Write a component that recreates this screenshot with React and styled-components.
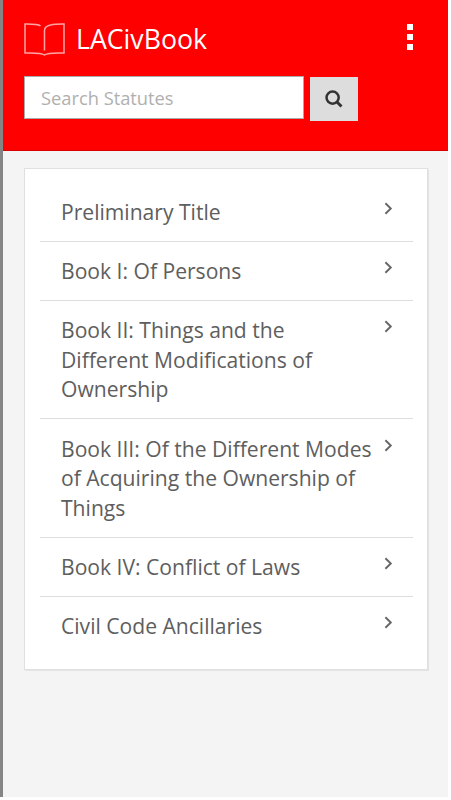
import React from 'react';
import styled, { createGlobalStyle } from 'styled-components';

const books = [
    'Preliminary Title',
    'Book I: Of Persons',
    'Book II: Things and the Different Modifications of Ownership',
    'Book III: Of the Different Modes of Acquiring the Ownership of Things',
    'Book IV: Conflict of Laws',
    'Civil Code Ancillaries',
];

export default function App () {
    return (
        <>
            <GlobalStyle />
            <Page>
                <Header>
                    <TitleBar>
                        <BookIcon />
                        <Title>LACivBook</Title>
                        <MenuButton aria-label="Menu">
                            <Dot /><Dot /><Dot />
                        </MenuButton>
                    </TitleBar>
                    <SearchForm onSubmit={e => e.preventDefault()}>
                        <SearchInput placeholder="Search Statutes" />
                        <SearchButton aria-label="Search"><SearchIcon /></SearchButton>
                    </SearchForm>
                </Header>
                <Card>
                    {books.map(title => (
                        <Item key={title}>
                            <ItemText>{title}</ItemText>
                            <Chevron />
                        </Item>
                    ))}
                </Card>
            </Page>
        </>
    )
}

function BookIcon () {
    return (
        <svg width="42" height="34" viewBox="0 0 42 34" fill="none" stroke="#ffa5a5" strokeWidth="1.5">
            <path d="M16.5 3.8C14 2 9 1.9 1 2V31C9 30.7 17 30.5 20.5 33C24 30.5 32 30.7 40 31V2C30 1.9 20.5 2.7 20.5 8.5V28.5" />
        </svg>
    )
}

function SearchIcon () {
    return (
        <svg width="18" height="18" viewBox="0 0 18 18" fill="none" stroke="#333" strokeWidth="2.5">
            <circle cx="7.6" cy="7.6" r="6.1" />
            <path d="M12 12L16.5 16.5" strokeWidth="3" />
        </svg>
    )
}

function Chevron () {
    return (
        <ChevronIcon width="9" height="13" viewBox="0 0 9 13" fill="none" stroke="#666" strokeWidth="1.9">
            <path d="M1.4 1.2L6.8 6.5L1.4 11.8" />
        </ChevronIcon>
    )
}

const GlobalStyle = createGlobalStyle`
    * {
        box-sizing: border-box;
    }

    body {
        margin: 0;
        background: #ffffff;
        font-family: "Open Sans", sans-serif;
    }
`;

const Page = styled.div`
    width: 448px;
    height: 797px;
    border-left: 3px solid #858585;
    background: #f4f4f4;
`;

const Header = styled.header`
    height: 151px;
    padding: 22px 35px 0 21px;
    background: #ff0000;
    border-bottom: 1px solid #d80000;
`;

const TitleBar = styled.div`
    display: flex;
    height: 34px;
    align-items: center;
`;

const Title = styled.h1`
    flex: 1;
    margin: 0 0 0 10px;
    color: #ffffff;
    font-size: 26.7px;
    font-weight: 400;
    line-height: 34px;
`;

const MenuButton = styled.button`
    display: grid;
    gap: 4px;
    margin-bottom: 4px;
    padding: 0;
    border: 0;
    background: none;
`;

const Dot = styled.span`
    width: 6px;
    height: 6px;
    background: #ffffff;
`;

const SearchForm = styled.form`
    display: flex;
    align-items: flex-start;
    gap: 6px;
    margin-top: 20px;
`;

const SearchInput = styled.input`
    width: 280px;
    height: 43px;
    padding: 0 15px 1px 16px;
    border: 1px solid #aaaaaa;
    border-radius: 0;
    background: #ffffff;
    font-family: inherit;
    font-size: 18.3px;

    &::placeholder {
        color: #b0b0b0;
    }
`;

const SearchButton = styled.button`
    display: grid;
    place-items: center;
    width: 48px;
    height: 44px;
    margin-top: 1px;
    padding: 0;
    border: 0;
    background: #dddddd;
`;

const Card = styled.ul`
    width: 404px;
    height: 502px;
    margin: 17px 0 0 21px;
    padding: 13.6px 14px 0 15px;
    border: 1px solid #e0e0e0;
    box-shadow: 0 0 1px 0.5px #e4e4e4;
    background: #ffffff;
    list-style: none;
`;

const Item = styled.li`
    display: flex;
    justify-content: space-between;
    padding: 14.3px 20px 14.3px 21px;
    color: #5e5e5e;
    font-size: 21.1px;
    line-height: 29.6px;

    & + & {
        border-top: 1.4px solid #dddddd;
    }
`;

const ItemText = styled.span`
    width: 316px;
`;

const ChevronIcon = styled.svg`
    flex: none;
    margin-top: 5px;
`;
